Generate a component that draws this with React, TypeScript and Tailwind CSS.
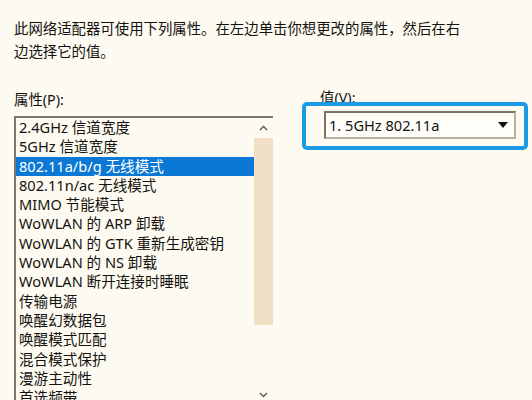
import React from "react";

const items = [
  "2.4GHz 信道宽度",
  "5GHz 信道宽度",
  "802.11a/b/g 无线模式",
  "802.11n/ac 无线模式",
  "MIMO 节能模式",
  "WoWLAN 的 ARP 卸载",
  "WoWLAN 的 GTK 重新生成密钥",
  "WoWLAN 的 NS 卸载",
  "WoWLAN 断开连接时睡眠",
  "传输电源",
  "唤醒幻数据包",
  "唤醒模式匹配",
  "混合模式保护",
  "漫游主动性",
  "首选频带",
];

export default function App() {
  return (
    <div
      className="w-[532px] h-[400px] overflow-hidden bg-[#fdfbf1] text-[#141210]"
      style={{ fontFamily: '"Noto Sans", "Noto Sans CJK SC", sans-serif' }}
    >
      <div className="pl-[14px] pt-[17px] text-[14.4px] leading-[23px]">
        <div>此网络适配器可使用下列属性。在左边单击你想更改的属性，然后在右</div>
        <div>边选择它的值。</div>
      </div>
      <div className="flex mt-[25px]">
        <div className="w-[290px] pl-[14px]">
          <div className="pt-[2px] text-[14.4px] leading-[20px] h-[22px]">属性(P):</div>
          <div className="mt-[6px] w-[259px] h-[300px] border-t-[2px] border-l-[2px] border-[#7e766a] flex overflow-hidden">
            <div className="flex-1">
              {items.map((t, i) => (
                <div
                  key={t}
                  className={
                    "h-[19.3px] leading-[19px] pl-[3px] text-[14.6px] whitespace-nowrap " +
                    (i === 2 ? "bg-[#0b78d6] text-white" : "")
                  }
                >
                  {t}
                </div>
              ))}
            </div>
            <div className="w-[19px] flex flex-col items-center">
              <div className="h-[20px] flex items-center justify-center">
                <svg width="9" height="6" viewBox="0 0 9 6">
                  <path d="M1 5 L4.5 1.5 L8 5" fill="none" stroke="#555" strokeWidth="1.3" />
                </svg>
              </div>
              <div className="w-[19px] h-[187px] bg-[#f2e0c6]" />
              <div className="h-[64px]" />
              <div className="h-[12px] flex items-center justify-center">
                <svg width="9" height="6" viewBox="0 0 9 6">
                  <path d="M1 1 L4.5 4.5 L8 1" fill="none" stroke="#555" strokeWidth="1.3" />
                </svg>
              </div>
            </div>
          </div>
        </div>
        <div className="flex-1">
          <div className="pl-[30px] text-[14.4px] leading-[20px] h-[14px] overflow-hidden">值(V):</div>
          <div className="ml-[12px] w-[226px] h-[48px] border-[4px] border-[#1b9ae6] rounded-[5px] pl-[18px] pt-[5px]">
            <div className="w-[192px] h-[28px] border-[2px] border-t-[#7c7264] border-l-[#7c7264] border-r-[#b9b09e] border-b-[#b9b09e] bg-[#fefdf8] flex items-center justify-between pl-[3px] pr-[6px]">
              <span className="text-[14.6px] leading-[20px]">1. 5GHz 802.11a</span>
              <svg width="10" height="6" viewBox="0 0 10 6">
                <path d="M0 0 L10 0 L5 6 Z" fill="#111" />
              </svg>
            </div>
          </div>
        </div>
      </div>
    </div>
  );
}
